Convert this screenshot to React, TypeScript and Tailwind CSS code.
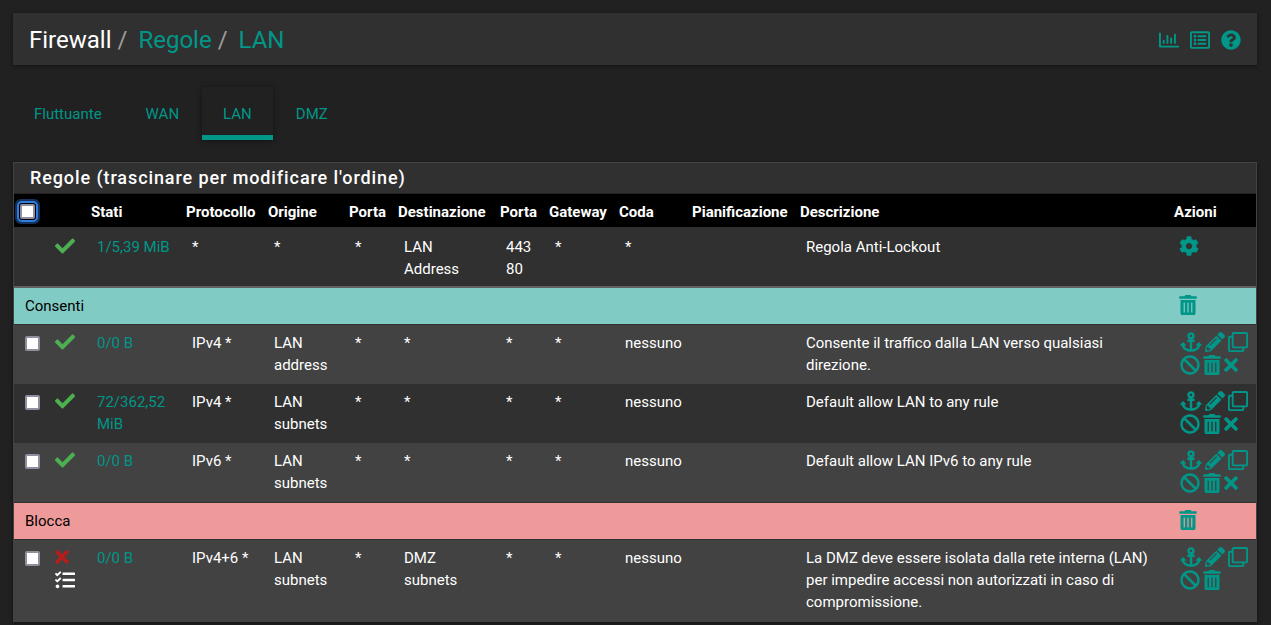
import type { ReactNode } from 'react'
import type { IconType } from 'react-icons'
import {
  FaAnchor,
  FaBan,
  FaCheck,
  FaCog,
  FaPencilAlt,
  FaQuestionCircle,
  FaRegChartBar,
  FaRegClone,
  FaRegListAlt,
  FaTasks,
  FaTimes,
  FaTrashAlt,
} from 'react-icons/fa'

type Rule = {
  id: string
  blocked?: boolean
  states: string
  protocol: string
  source: string
  destination: string
  description: string
  killStates?: boolean
  striped: boolean
}

const allowRules: Rule[] = [
  {
    id: 'r1',
    states: '0/0 B',
    protocol: 'IPv4 *',
    source: 'LAN address',
    destination: '*',
    description: 'Consente il traffico dalla LAN verso qualsiasi direzione.',
    killStates: true,
    striped: true,
  },
  {
    id: 'r2',
    states: '72/362,52 MiB',
    protocol: 'IPv4 *',
    source: 'LAN subnets',
    destination: '*',
    description: 'Default allow LAN to any rule',
    killStates: true,
    striped: false,
  },
  {
    id: 'r3',
    states: '0/0 B',
    protocol: 'IPv6 *',
    source: 'LAN subnets',
    destination: '*',
    description: 'Default allow LAN IPv6 to any rule',
    killStates: true,
    striped: true,
  },
]

const blockRules: Rule[] = [
  {
    id: 'r4',
    blocked: true,
    states: '0/0 B',
    protocol: 'IPv4+6 *',
    source: 'LAN subnets',
    destination: 'DMZ subnets',
    description:
      'La DMZ deve essere isolata dalla rete interna (LAN) per impedire accessi non autorizzati in caso di compromissione.',
    striped: true,
  },
]

const tabs = ['Fluttuante', 'WAN', 'LAN', 'DMZ']

const columns = [
  'Stati',
  'Protocollo',
  'Origine',
  'Porta',
  'Destinazione',
  'Porta',
  'Gateway',
  'Coda',
  'Pianificazione',
  'Descrizione',
  'Azioni',
]

// Glyphs share one height; their widths differ.
const glyphWidths = {
  narrow: 'w-[14px]',
  medium: 'w-[18px]',
  square: 'w-5',
  wide: 'w-[22px]',
}

function IconLink({
  icon: Icon,
  label,
  size = 'square',
}: {
  icon: IconType
  label: string
  size?: keyof typeof glyphWidths
}) {
  return (
    <a href="#" aria-label={label} className="text-[#009688]">
      <Icon className={`h-5 ${glyphWidths[size]}`} />
    </a>
  )
}

function Cell({ children }: { children?: ReactNode }) {
  return <td className="pt-[7px] pr-1 pb-2 pl-[11px]">{children}</td>
}

function RuleRow({ rule }: { rule: Rule }) {
  return (
    <tr className={rule.striped ? 'bg-[#424242] align-top' : 'bg-[#303030] align-top'}>
      <td className="pt-[11px] pl-[11px]">
        <input
          type="checkbox"
          aria-label={`Seleziona ${rule.description}`}
          className="block size-[15px] appearance-none rounded-xs border-2 border-[#8f8f9d] bg-white"
        />
      </td>
      <td className="pt-[7px] pl-[11px]">
        {rule.blocked ? (
          <>
            <FaTimes className="h-5 w-[14px] text-[#b71c1c]" />
            <FaTasks className="mt-[3px] size-5 text-white" />
          </>
        ) : (
          <FaCheck className="size-5 text-[#4caf50]" />
        )}
      </td>
      <Cell>
        <a href="#" className="text-[#009688]">
          {rule.states}
        </a>
      </Cell>
      <Cell>{rule.protocol}</Cell>
      <Cell>{rule.source}</Cell>
      <Cell>*</Cell>
      <Cell>{rule.destination}</Cell>
      <Cell>*</Cell>
      <Cell>*</Cell>
      <Cell>nessuno</Cell>
      <Cell />
      <Cell>{rule.description}</Cell>
      <td className="pt-[7px] pl-[11px]">
        <div className="flex flex-wrap gap-[3px]">
          <IconLink icon={FaAnchor} size="wide" label="Sposta qui le regole selezionate" />
          <IconLink icon={FaPencilAlt} label="Modifica" />
          <IconLink icon={FaRegClone} label="Copia" />
          <IconLink icon={FaBan} label="Disabilita" />
          <IconLink icon={FaTrashAlt} size="medium" label="Elimina" />
          {rule.killStates && <IconLink icon={FaTimes} size="narrow" label="Termina gli stati" />}
        </div>
      </td>
    </tr>
  )
}

function SeparatorRow({ title, color }: { title: string; color: string }) {
  return (
    <tr className={`${color} border-y border-[#303030] text-black`}>
      <td colSpan={12} className="py-[7px] pl-[11px]">
        {title}
      </td>
      <td className="pb-[2px] pl-[10px]">
        <IconLink icon={FaTrashAlt} size="medium" label="Elimina separatore" />
      </td>
    </tr>
  )
}

export default function App() {
  return (
    <div className="min-h-screen bg-[#212121] pt-[13px] pr-[14px] pb-1 pl-[13px] font-[Roboto,sans-serif] text-[15px] leading-[22px] text-white">
      <header className="flex h-[52px] items-center justify-between bg-[#303030] px-4 pt-[2px] shadow-[0_1px_4px_rgba(0,0,0,0.45)]">
        <nav aria-label="Percorso">
          <ol className="flex gap-[6px] text-2xl">
            <li>Firewall</li>
            <li className="flex gap-[11px]">
              <span className="text-[#9e9e9e]">/</span>
              <a href="#" className="text-[#009688]">
                Regole
              </a>
            </li>
            <li className="flex gap-[11px]">
              <span className="text-[#9e9e9e]">/</span>
              <a href="#" className="text-[#009688]">
                LAN
              </a>
            </li>
          </ol>
        </nav>
        <div className="flex gap-[11px]">
          <IconLink icon={FaRegChartBar} label="Grafici" />
          <IconLink icon={FaRegListAlt} label="Registri" />
          <IconLink icon={FaQuestionCircle} label="Aiuto" />
        </div>
      </header>

      <nav aria-label="Interfacce" className="mt-[22px] flex gap-[2px]">
        {tabs.map((tab) => (
          <a
            key={tab}
            href="#"
            aria-current={tab === 'LAN' ? 'page' : undefined}
            className={
              tab === 'LAN'
                ? 'border-b-5 border-[#009688] px-[21px] pt-4 pb-[10px] text-[#009688] shadow-[0_1px_6px_rgba(0,0,0,0.45)]'
                : 'border-b-5 border-transparent px-[21px] pt-4 pb-[10px] text-[#009688]'
            }
          >
            {tab}
          </a>
        ))}
      </nav>

      <section className="mt-[22px] border border-[#424242] bg-[#303030] shadow-[0_1px_4px_rgba(0,0,0,0.45)]">
        <h2 className="border-b border-[#212121] px-4 py-[3px] text-lg font-medium tracking-wider leading-6">
          Regole (trascinare per modificare l'ordine)
        </h2>
        <table className="w-full table-fixed border-collapse text-left">
          <colgroup>
            <col className="w-[30px]" />
            <col className="w-[42px]" />
            <col className="w-[95px]" />
            <col className="w-[82px]" />
            <col className="w-[81px]" />
            <col className="w-[49px]" />
            <col className="w-[102px]" />
            <col className="w-[49px]" />
            <col className="w-[70px]" />
            <col className="w-[73px]" />
            <col className="w-[108px]" />
            <col />
            <col className="w-[87px]" />
          </colgroup>
          <thead>
            <tr className="bg-black">
              <th className="pt-[2px] pl-[6px]">
                <input
                  type="checkbox"
                  aria-label="Seleziona tutte le regole"
                  className="block size-[15px] appearance-none rounded-xs border-2 border-[#8f8f9d] bg-white shadow-[0_0_0_1px_#000,0_0_0_3px_#2f7de1,0_0_0_5px_#16305a]"
                />
              </th>
              <th />
              {columns.map((name, i) => (
                <th key={i} className="pt-[7px] pb-1 pl-[5px] font-bold">
                  {name}
                </th>
              ))}
            </tr>
          </thead>
          <tbody>
            <tr className="border-b-2 border-[#616161] align-top">
              <td />
              <td className="pt-[9px] pl-[11px]">
                <FaCheck className="size-5 text-[#4caf50]" />
              </td>
              <td className="pt-[9px] pb-[6px] pl-[11px]">
                <a href="#" className="text-[#009688]">
                  1/5,39 MiB
                </a>
              </td>
              <td className="pt-[9px] pl-[11px]">*</td>
              <td className="pt-[9px] pl-[11px]">*</td>
              <td className="pt-[9px] pl-[11px]">*</td>
              <td className="pt-[9px] pb-[6px] pl-[11px]">
                LAN
                <br />
                Address
              </td>
              <td className="pt-[9px] pl-[11px]">
                443
                <br />
                80
              </td>
              <td className="pt-[9px] pl-[11px]">*</td>
              <td className="pt-[9px] pl-[11px]">*</td>
              <td />
              <td className="pt-[9px] pl-[11px]">Regola Anti-Lockout</td>
              <td className="pt-[9px] pl-[10px]">
                <IconLink icon={FaCog} label="Impostazioni" />
              </td>
            </tr>
            <SeparatorRow title="Consenti" color="bg-[#80cbc4]" />
            {allowRules.map((rule) => (
              <RuleRow key={rule.id} rule={rule} />
            ))}
            <SeparatorRow title="Blocca" color="bg-[#ef9a9a]" />
            {blockRules.map((rule) => (
              <RuleRow key={rule.id} rule={rule} />
            ))}
          </tbody>
        </table>
      </section>
    </div>
  )
}
